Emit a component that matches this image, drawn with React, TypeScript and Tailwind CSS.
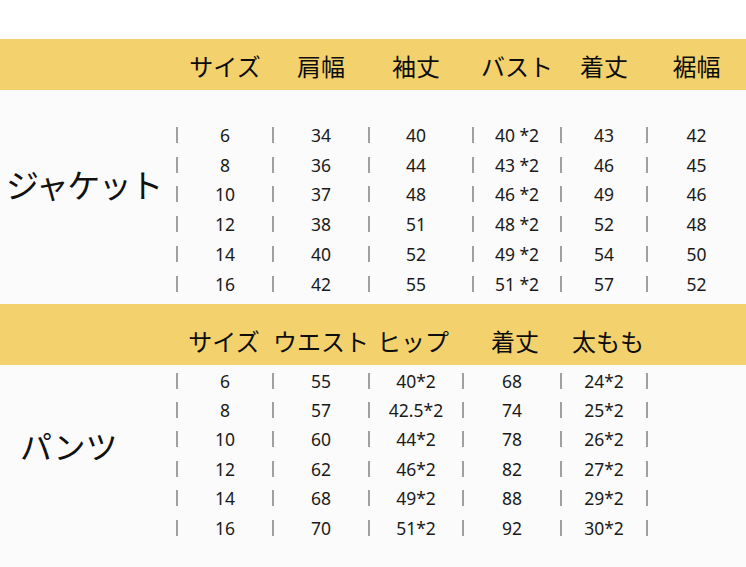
import React from "react";

const jacketCols = ["w-[96px]", "w-[96px]", "w-[94px]", "w-[98px] pl-[10px]", "w-[86px]", "w-[99px]"];

const jacketHead = ["サイズ", "肩幅", "袖丈", "バスト", "着丈", "裾幅"];
const jacketRows = [
  ["6", "34", "40", "40 *2", "43", "42"],
  ["8", "36", "44", "43 *2", "46", "45"],
  ["10", "37", "48", "46 *2", "49", "46"],
  ["12", "38", "51", "48 *2", "52", "48"],
  ["14", "40", "52", "49 *2", "54", "50"],
  ["16", "42", "55", "51 *2", "57", "52"],
];

const pantsHead = ["サイズ", "ウエスト", "ヒップ", "着丈", "太もも", ""];
const pantsRows = [
  ["6", "55", "40*2", "68", "24*2", ""],
  ["8", "57", "42.5*2", "74", "25*2", ""],
  ["10", "60", "44*2", "78", "26*2", ""],
  ["12", "62", "46*2", "82", "27*2", ""],
  ["14", "68", "49*2", "88", "29*2", ""],
  ["16", "70", "51*2", "92", "30*2", ""],
];
const pantsCols = ["w-[96px]", "w-[96px]", "w-[94px]", "w-[98px]", "w-[86px]", "w-[99px]"];
const pantsHeadCols = ["w-[94px]", "w-[100px]", "w-[84px]", "w-[110px] pl-[10px]", "w-[86px]", "w-[99px]"];

function Band({ items, cols, pad }: { items: string[]; cols: string[]; pad: string }) {
  return (
    <div className={`flex bg-[#f3d26d] ${pad}`}>
      <div className="w-[177px] shrink-0" />
      {items.map((t, i) => (
        <div key={i} className={`${cols[i]} shrink-0 flex items-center justify-center text-[24px] leading-[32px] text-[#0d0d0d]`}>
          {t}
        </div>
      ))}
    </div>
  );
}

function Row({ cells, cols, h }: { cells: string[]; cols: string[]; h: string }) {
  return (
    <div className={`flex ${h}`}>
      {cells.map((c, i) => (
        <div key={i} className={`${cols[i]} shrink-0 flex items-center`}>
          <span className="w-[2px] h-[16px] bg-[#a0a0a0] shrink-0" />
          <span className="flex-1 text-center text-[17.5px] text-[#1a1a1a]">{c}</span>
        </div>
      ))}
    </div>
  );
}

export default function App() {
  return (
    <div
      className="w-[746px] h-[567px] overflow-hidden bg-white"
      style={{ fontFamily: '"Noto Sans", "Noto Sans CJK JP", sans-serif' }}
    >
      <div className="h-[39px] bg-white" />
      <Band items={jacketHead} cols={jacketCols} pad="h-[51px] pt-[5px]" />

      <div className="flex bg-[#fbfbfb] pt-[30px] h-[214px]">
        <div className="w-[177px] shrink-0 pl-[6px] pt-[46px]">
          <div className="text-[33px] leading-[40px] tracking-[-1.5px] text-[#111]">ジャケット</div>
        </div>
        <div className="flex flex-col -ml-px">
          {jacketRows.map((r, i) => (
            <Row key={i} cells={r} cols={jacketCols} h="h-[29.8px]" />
          ))}
        </div>
      </div>

      <Band items={pantsHead} cols={pantsHeadCols} pad="h-[61px] pt-[15px]" />

      <div className="flex bg-[#fbfbfb] pt-px h-[202px]">
        <div className="w-[177px] shrink-0 pl-[20px] pt-[61px]">
          <div className="text-[32px] leading-[40px] text-[#111]">パンツ</div>
        </div>
        <div className="flex flex-col -ml-px">
          {pantsRows.map((r, i) => (
            <Row key={i} cells={r} cols={pantsCols} h="h-[29.4px]" />
          ))}
        </div>
      </div>
    </div>
  );
}
